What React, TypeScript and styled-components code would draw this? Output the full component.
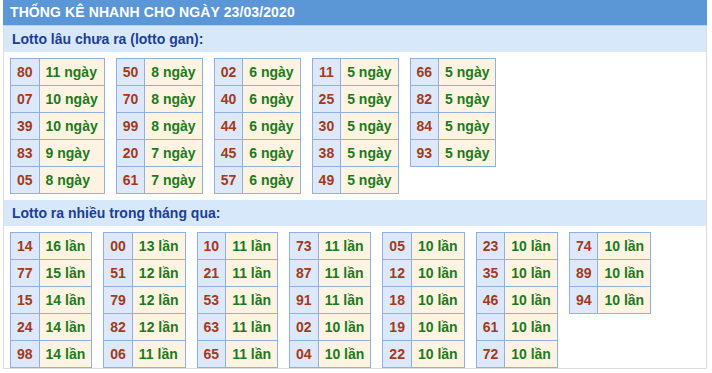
import React from "react";
import styled, { createGlobalStyle } from "styled-components";

const GlobalStyle = createGlobalStyle`
  body {
    margin: 0;
    background: #ffffff;
    font-family: "Liberation Sans", Arial, sans-serif;
  }
`;

type Entry = [string, string];

const ganTables: Entry[][] = [
  [["80", "11 ngày"], ["07", "10 ngày"], ["39", "10 ngày"], ["83", "9 ngày"], ["05", "8 ngày"]],
  [["50", "8 ngày"], ["70", "8 ngày"], ["99", "8 ngày"], ["20", "7 ngày"], ["61", "7 ngày"]],
  [["02", "6 ngày"], ["40", "6 ngày"], ["44", "6 ngày"], ["45", "6 ngày"], ["57", "6 ngày"]],
  [["11", "5 ngày"], ["25", "5 ngày"], ["30", "5 ngày"], ["38", "5 ngày"], ["49", "5 ngày"]],
  [["66", "5 ngày"], ["82", "5 ngày"], ["84", "5 ngày"], ["93", "5 ngày"]],
];

const hotTables: Entry[][] = [
  [["14", "16 lần"], ["77", "15 lần"], ["15", "14 lần"], ["24", "14 lần"], ["98", "14 lần"]],
  [["00", "13 lần"], ["51", "12 lần"], ["79", "12 lần"], ["82", "12 lần"], ["06", "11 lần"]],
  [["10", "11 lần"], ["21", "11 lần"], ["53", "11 lần"], ["63", "11 lần"], ["65", "11 lần"]],
  [["73", "11 lần"], ["87", "11 lần"], ["91", "11 lần"], ["02", "10 lần"], ["04", "10 lần"]],
  [["05", "10 lần"], ["12", "10 lần"], ["18", "10 lần"], ["19", "10 lần"], ["22", "10 lần"]],
  [["23", "10 lần"], ["35", "10 lần"], ["46", "10 lần"], ["61", "10 lần"], ["72", "10 lần"]],
  [["74", "10 lần"], ["89", "10 lần"], ["94", "10 lần"]],
];

const StatTable = ({ rows }: { rows: Entry[] }) => (
  <Table>
    <tbody>
      {rows.map(([num, value]) => (
        <tr key={num}>
          <NumCell>{num}</NumCell>
          <ValueCell>{value}</ValueCell>
        </tr>
      ))}
    </tbody>
  </Table>
);

const Section = ({ title, tables }: { title: string; tables: Entry[][] }) => (
  <>
    <SectionTitle>{title}</SectionTitle>
    <TableRow>
      {tables.map((rows, i) => (
        <StatTable key={i} rows={rows} />
      ))}
    </TableRow>
  </>
);

const App = () => (
  <>
    <GlobalStyle />
    <Box>
      <Header>THỐNG KÊ NHANH CHO NGÀY 23/03/2020</Header>
      <Section title="Lotto lâu chưa ra (lotto gan):" tables={ganTables} />
      <Section title="Lotto ra nhiều trong tháng qua:" tables={hotTables} />
    </Box>
  </>
);

export default App;

const Box = styled.div`
  width: 702px;
  margin-left: 3px;
  height: 368px;
  border-left: 1px solid #dcdcdc;
  border-right: 1px solid #dcdcdc;
  border-bottom: 1px solid #dcdcdc;
`;

const Header = styled.div`
  height: 25px;
  line-height: 25px;
  margin-left: -1px;
  margin-right: -1px;
  padding-left: 7px;
  background: #5b96d6;
  color: #ffffff;
  font-size: 14px;
  font-weight: 700;
  letter-spacing: 0.1px;
  border-bottom: 1px solid #b9d3ef;
`;

const SectionTitle = styled.div`
  height: 26px;
  line-height: 26px;
  padding-left: 8px;
  background: #d6e8fa;
  color: #1d3f93;
  font-size: 14px;
  font-weight: 700;
`;

const TableRow = styled.div`
  display: flex;
  align-items: flex-start;
  gap: 11px;
  padding: 6px;
`;

const Table = styled.table`
  border-collapse: collapse;
  font-size: 14px;
  font-weight: 700;
`;

const Cell = styled.td`
  height: 26px;
  padding: 0 6px;
  border: 1px solid #8fb0e0;
  white-space: nowrap;
  line-height: 26px;
`;

const NumCell = styled(Cell)`
  background: #dde9fb;
  color: #a23a1c;
  text-align: center;
`;

const ValueCell = styled(Cell)`
  background: #fff3e1;
  color: #1c7a1c;
`;
